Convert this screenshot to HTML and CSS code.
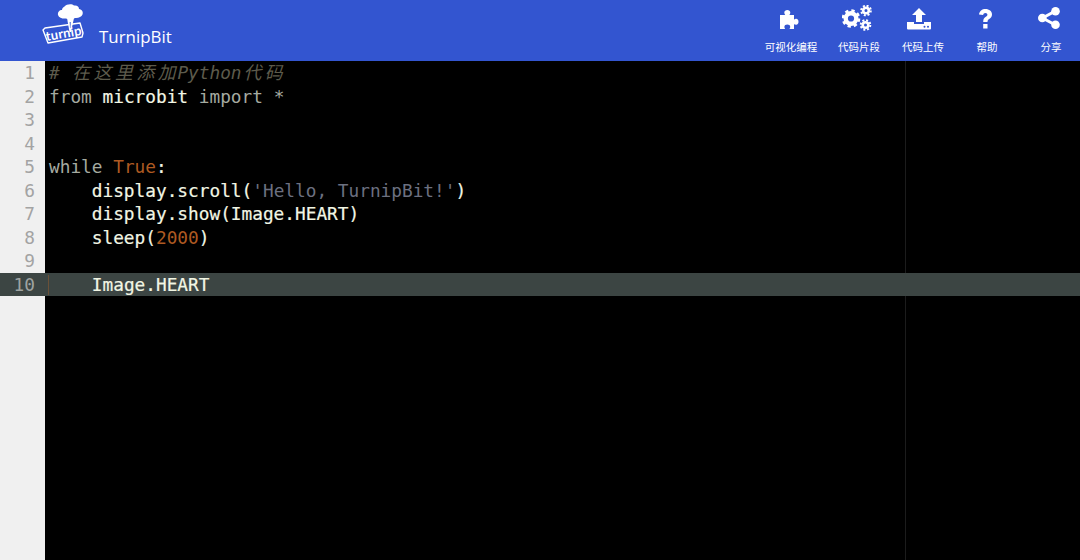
FILE: index.html
```html
<!DOCTYPE html>
<html lang="zh">
<head>
<meta charset="utf-8">
<title>TurnipBit</title>
<link rel="stylesheet" href="styles.css">
</head>
<body>
<header class="topbar">
  <div class="brand">
    <svg class="logo" viewBox="0 0 46 46" width="46" height="46" aria-hidden="true">
      <path fill="none" stroke="#fff" stroke-width="1.400" stroke-linejoin="round" d="M5 25l35-5 3 10-1 4-34 6-5-13z"/>
      <text class="logo-word" x="6.500" y="38" transform="rotate(-10 6.500 38)">turnip</text>
      <path fill="#fff" d="M24.500 3.500c2-2.500 7.500-3 9.500-1 3-.5 5 1 5 3.500 3 .5 4.500 3 3.500 5.500-1 2.500-4.500 4-7.500 3.500-1.500 1-7 1.500-9 .5-3 .5-7-.5-8-3.500-.5-3 1.500-5 4-5 0-1.500 1-2.500 2.500-3.500z"/>
      <path fill="#fff" d="M27 15h7l-3 14h-1.500z"/>
      <path fill="#3355d0" d="M29.700 19h1l-.3 6h-.4z"/>
    </svg>
    <span class="brand-name">TurnipBit</span>
  </div>
  <nav class="tools">
    <a class="tool t1">
      <svg class="ico puzzle" viewBox="0 0 24 24" aria-hidden="true"><path fill="#fff" d="M3 8h5.200c-.6-1-.9-1.600-.9-2.400C7.300 3.900 8.700 3 10.300 3s3 .9 3 2.600c0 .8-.3 1.400-.9 2.400H17v4.600c1-.6 1.500-.8 2.200-.8 1.500 0 2.300 1.400 2.300 3s-.8 3-2.300 3c-.7 0-1.200-.2-2.200-.8V22H12.500c.5-1 .7-1.500.7-2.200 0-1.400-1.300-2.200-2.900-2.200s-2.900.8-2.900 2.200c0 .7.200 1.200.7 2.200H3z"/></svg>
      <span>可视化编程</span>
    </a>
    <a class="tool t2">
      <svg class="ico gears" viewBox="0 0 30 26" aria-hidden="true">
        <g fill="none" stroke="#fff">
          <circle cx="9" cy="13.500" r="5.300" stroke-width="4.400"/>
          <circle cx="9" cy="13.500" r="8" stroke-width="2.600" stroke-dasharray="3.300 3"/>
          <circle cx="24" cy="5.500" r="2.800" stroke-width="2.600"/>
          <circle cx="24" cy="5.500" r="4.800" stroke-width="2" stroke-dasharray="2 1.770"/>
          <circle cx="23.500" cy="20" r="2.800" stroke-width="2.600"/>
          <circle cx="23.500" cy="20" r="4.800" stroke-width="2" stroke-dasharray="2 1.770"/>
        </g>
      </svg>
      <span>代码片段</span>
    </a>
    <a class="tool t3">
      <svg class="ico upload" viewBox="0 0 26 24" aria-hidden="true">
        <path fill="#fff" d="M13 1l7 7h-4v7h-6V8H6z"/>
        <path fill="#fff" d="M1 15h7v2h10v-2h7v6.500a1 1 0 0 1-1 1H2a1 1 0 0 1-1-1z"/>
        <circle cx="18.500" cy="19.800" r="1" fill="#3355d0"/>
        <circle cx="22" cy="19.800" r="1" fill="#3355d0"/>
      </svg>
      <span>代码上传</span>
    </a>
    <a class="tool t4">
      <svg class="ico help" viewBox="0 0 24 24" aria-hidden="true"><path fill="#fff" d="M6 7.500C6.500 4 9 2 12.500 2c3.700 0 6.500 2.300 6.500 5.500 0 2.400-1.300 3.500-2.800 4.600-1.200.9-1.700 1.300-1.700 2.900h-4.300c0-2.800.9-3.800 2.300-4.900 1.100-.8 1.900-1.300 1.900-2.400 0-1-.8-1.800-2-1.800-1.300 0-2 .8-2.300 2.200zM10.200 17h4.300v4.500h-4.300z"/></svg>
      <span>帮助</span>
    </a>
    <a class="tool t5">
      <svg class="ico share" viewBox="0 0 24 24" aria-hidden="true">
        <path fill="none" stroke="#fff" stroke-width="3" d="M18.500 5L5.500 12l13 7"/>
        <circle cx="18.500" cy="5.200" r="4.300" fill="#fff"/>
        <circle cx="5.300" cy="12" r="4.300" fill="#fff"/>
        <circle cx="18.500" cy="18.800" r="4.300" fill="#fff"/>
      </svg>
      <span>分享</span>
    </a>
  </nav>
</header>
<main class="editor">
  <div class="gutter">
    <div class="num">1</div><div class="num">2</div><div class="num">3</div><div class="num">4</div><div class="num">5</div><div class="num">6</div><div class="num">7</div><div class="num">8</div><div class="num">9</div><div class="num active-num">10</div>
  </div>
  <div class="code">
    <div class="margin"></div>
    <div class="line comment"># <span class="cjk">在这里添加</span>Python<span class="cjk">代码</span></div>
    <div class="line"><span class="kw">from</span> <span class="id">microbit</span> <span class="kw">import</span> <span class="kw">*</span></div>
    <div class="line"></div>
    <div class="line"></div>
    <div class="line"><span class="kw">while</span> <span class="const">True</span><span class="id">:</span></div>
    <div class="line id">    display.scroll(<span class="str">'Hello, TurnipBit!'</span>)</div>
    <div class="line id">    display.show(Image.HEART)</div>
    <div class="line id">    sleep(<span class="const">2000</span>)</div>
    <div class="line"></div>
    <div class="line id active-line"><span class="guide">    </span>Image.HEART</div>
  </div>
</main>
</body>
</html>
```
FILE: styles.css
```css
* { box-sizing: border-box; }
html, body { margin: 0; height: 100%; overflow: hidden; background: #000; }
body { display: flex; flex-direction: column; }
.topbar {
  height: 61px;
  flex: none;
  background: #3355d0;
  display: flex;
  justify-content: space-between;
  color: #fff;
  font-family: "Noto Sans CJK SC", "Noto Sans", sans-serif;
}
.brand { display: flex; align-items: flex-start; padding: 3px 0 0 40px; }
.logo { flex: none; }
.logo-word { font: 700 13px "Lato", "Open Sans", sans-serif; fill: #fff; letter-spacing: .2px; }
.brand-name { font: 16.900px/1 "Open Sans", "Noto Sans", sans-serif; margin: 26px 0 0 13px; }
.tools { display: flex; height: 61px; }
.tool {
  display: flex;
  flex-direction: column;
  align-items: center;
  font-size: 10.500px;
  line-height: 14px;
  padding-bottom: 7px;
}
.tool span { margin-top: auto; white-space: nowrap; }
.ico { width: 24px; height: 24px; display: block; flex: none; }
.puzzle { margin: 7px 4px 0 0; }
.gears { width: 30px; height: 26px; margin: 5px 4px 0 0; }
.upload { width: 26px; margin: 7px 8px 0 0; }
.help { margin: 7px 5px 0 0; }
.share { margin: 6px 5px 0 0; }
.t1 { width: 52px; margin-right: 21px; }
.t2 { width: 42px; margin-right: 22px; }
.t3 { width: 42px; margin-right: 33px; }
.t4 { width: 20px; margin-right: 43px; }
.t5 { width: 22px; margin-right: 18px; }
.editor {
  flex: 1;
  display: flex;
  font: 17.770px/25.500px "DejaVu Sans Mono", "Noto Sans CJK SC", monospace;
  background: #000;
  min-height: 0;
}
.gutter { width: 45px; flex: none; background: #f0f0f0; color: #a3a3a3; text-align: right; padding-right: 10px; }
.num { height: 23.500px; }
.active-num { background: #3c4543; margin-right: -10px; padding-right: 10px; color: #9fa3a1; }
.code { flex: 1; position: relative; }
.margin { position: absolute; left: 860px; top: 0; bottom: 0; width: 1px; background: #1c1c1c; }
.line { height: 23.500px; padding-left: 4px; white-space: pre; position: relative; color: #a5aaa0; }
.comment { color: #5d5b4c; font-style: italic; }
.cjk { letter-spacing: 3.630px; margin: 0 -1.800px 0 1.800px; }
.kw { color: #a5aaa0; }
.id { color: #f2f6e4; -webkit-text-stroke: .2px; }
.line .const { color: #ae5a22; -webkit-text-stroke: 0; }
.line .str { color: #6c7080; -webkit-text-stroke: 0; }
.active-line { background: #3c4543; }
.guide { border-left: 1px solid #6b5138; margin-left: -1px; }
```
